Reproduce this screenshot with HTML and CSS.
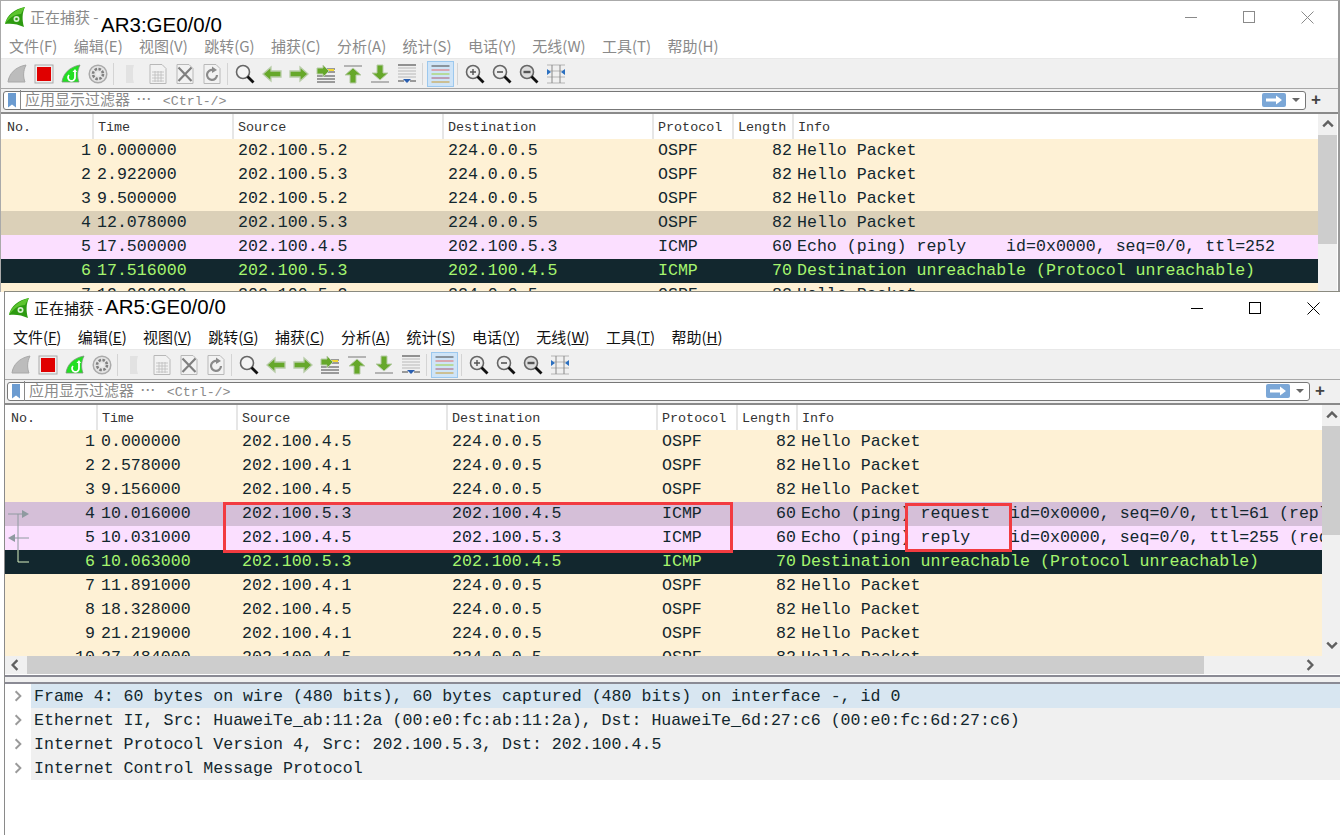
FILE: index.html
```html
<!DOCTYPE html>
<html lang="zh-CN">
<head>
  <meta charset="UTF-8">
  <title>正在捕获</title>
  <link rel="stylesheet" href="styles.css">
</head>
<body>
  <svg class="icon-defs" aria-hidden="true">
    <symbol id="i-logo" viewBox="0 0 20 20"><path d="M0 17C2 8 9 2 20 0C17 6 17 13 19 20C13 17 6 16 0 17Z" fill="#2c9a10"/><path d="M0 17C2 9 10 3 20 0C18 3 17 5 16 7C10 7 4 11 0 17Z" fill="#5cc52e"/><circle cx="11.5" cy="12" r="3" fill="#d8f0d0"/><circle cx="11.5" cy="12" r="1.3" fill="#2c9a10"/></symbol>
    <symbol id="i-fin" viewBox="0 0 20 20"><path d="M1 18C2 10 8 3 19 1C16 7 16 13 18 18Z" fill="#bcbcbc" stroke="#a8a8a8"/></symbol>
    <symbol id="i-stop" viewBox="0 0 20 20"><rect x="1" y="1" width="18" height="18" fill="#eee" stroke="#aaa"/><rect x="3" y="3" width="14" height="14" fill="#e00000"/></symbol>
    <symbol id="i-restart" viewBox="0 0 20 20"><path d="M1 18C2 10 8 3 19 1C16 7 16 13 18 18Z" fill="#22e022" stroke="#7a947a" stroke-width=".8"/><path d="M14 8V13A3.5 3.5 0 1 1 8 11" fill="none" stroke="#fff" stroke-width="1.8"/><path d="M11.5 8H16L14 5Z" fill="#fff"/></symbol>
    <symbol id="i-gear" viewBox="0 0 20 20"><circle cx="10" cy="10" r="8.8" fill="#e4e4e4" stroke="#aaa" stroke-width="1.5"/><circle cx="10" cy="10" r="5" fill="none" stroke="#808080" stroke-width="2.6" stroke-dasharray="2.5 1.4"/><circle cx="10" cy="10" r="2" fill="#eee"/></symbol>
    <symbol id="i-open" viewBox="0 0 20 20"><path d="M5 1H13L12 5V15L13 19H5Z" fill="#e2e2e2"/></symbol>
    <symbol id="i-file" viewBox="0 0 20 20"><path d="M2 .5H14L18 4.5V19.5H2Z" fill="#f2f2f2" stroke="#b8b8b8"/><path d="M4 8H16M4 11H16M4 14H16M4 17H16M7 7V18M10 7V18M13 7V18" stroke="#bcbcbc" stroke-width=".8"/></symbol>
    <symbol id="i-close" viewBox="0 0 20 20"><path d="M2 .5H14L18 4.5V19.5H2Z" fill="#f2f2f2" stroke="#b8b8b8"/><path d="M3.5 3.5L16.5 17M16.5 3.5L3.5 17" stroke="#808080" stroke-width="2.2"/></symbol>
    <symbol id="i-reload" viewBox="0 0 20 20"><path d="M2 .5H14L18 4.5V19.5H2Z" fill="#f2f2f2" stroke="#b8b8b8"/><path d="M15 11A5 5 0 1 1 11 6" fill="none" stroke="#8a8a8a" stroke-width="2.2"/><path d="M10 2.5L15 6L10 9Z" fill="#8a8a8a"/></symbol>
    <symbol id="i-find" viewBox="0 0 20 20"><circle cx="8" cy="8" r="6.5" fill="#f4f4f4" stroke="#666" stroke-width="1.6"/><path d="M12.5 12.5L18.5 18.5" stroke="#111" stroke-width="2.8"/></symbol>
    <symbol id="i-prev" viewBox="0 0 20 20"><path d="M1 10L9 3V7H19V13H9V17Z" fill="#66a82a" stroke="#b8cca8" stroke-width="1.3"/></symbol>
    <symbol id="i-next" viewBox="0 0 20 20"><path d="M19 10L11 3V7H1V13H11V17Z" fill="#66a82a" stroke="#b8cca8" stroke-width="1.3"/></symbol>
    <symbol id="i-goto" viewBox="0 0 20 20"><path d="M1 5H19M1 8H19M1 12H19M1 15H19M1 18H19" stroke="#444" stroke-width="1.1"/><path d="M11 6H18" stroke="#f2d836" stroke-width="2"/><path d="M13 7L7 1V4H1V10H7V13Z" fill="#66a82a" stroke="#b8cca8"/></symbol>
    <symbol id="i-top" viewBox="0 0 20 20"><path d="M1 2H19" stroke="#a0a0a0" stroke-width="1.5"/><path d="M10 4L18 11H13V19H7V11H2Z" fill="#66a82a" stroke="#b8cca8"/></symbol>
    <symbol id="i-bottom" viewBox="0 0 20 20"><path d="M1 18H19" stroke="#a0a0a0" stroke-width="1.5"/><path d="M10 16L18 9H13V1H7V9H2Z" fill="#66a82a" stroke="#b8cca8"/></symbol>
    <symbol id="i-last" viewBox="0 0 20 20"><path d="M1 1H19" stroke="#444" stroke-width="1.1"/><path d="M1 4H19M1 7H19M1 10H19M1 13H19" stroke="#b8b8b8"/><path d="M1 17H7M13 17H19" stroke="#444" stroke-width="1.1"/><path d="M6 15H14L10 19Z" fill="#2a5fb0"/></symbol>
    <symbol id="i-color" viewBox="0 0 20 20"><path d="M1 2H19" stroke="#444"/><path d="M1 6H19" stroke="#e06a6a"/><path d="M1 10H19" stroke="#9ed040"/><path d="M1 14H19" stroke="#a85a70"/><path d="M1 18H19" stroke="#c89a30"/></symbol>
    <symbol id="i-zoomin" viewBox="0 0 20 20"><circle cx="8" cy="8" r="6.5" fill="#eee" stroke="#666" stroke-width="1.6"/><path d="M5 8H11M8 5V11" stroke="#555" stroke-width="1.4"/><path d="M12.5 12.5L18.5 18.5" stroke="#111" stroke-width="2.8"/></symbol>
    <symbol id="i-zoomout" viewBox="0 0 20 20"><circle cx="8" cy="8" r="6.5" fill="#eee" stroke="#666" stroke-width="1.6"/><path d="M5 8H11" stroke="#555" stroke-width="1.6"/><path d="M12.5 12.5L18.5 18.5" stroke="#111" stroke-width="2.8"/></symbol>
    <symbol id="i-zoomreset" viewBox="0 0 20 20"><circle cx="8" cy="8" r="6.5" fill="#ddd" stroke="#666" stroke-width="1.6"/><rect x="4.5" y="6.8" width="7" height="2.4" fill="#555"/><path d="M12.5 12.5L18.5 18.5" stroke="#111" stroke-width="2.8"/></symbol>
    <symbol id="i-resize" viewBox="0 0 20 20"><path d="M1 1H19M1 7H19M1 13H19M1 19H19" stroke="#b4b4b4"/><path d="M6 1V19M14 1V19" stroke="#888"/><path d="M1 5L5 8L1 11Z M19 5L15 8L19 11Z" fill="#2a6fc0"/></symbol>
    <symbol id="i-go" viewBox="0 0 24 14"><rect width="24" height="14" rx="2" fill="#7ba7d7"/><path d="M4 5.5H14V2.5L20 7L14 11.5V8.5H4Z" fill="#fff"/></symbol>
  </svg>

  <div class="desktop">
    <section class="window window-back">
      <header class="titlebar">
        <svg class="logo"><use href="#i-logo"/></svg>
        <span class="title-text">正在捕获 -</span>
        <span class="title-name">AR3:GE0/0/0</span>
        <div class="win-controls">
          <span class="win-btn"><i class="win-min"></i></span>
          <span class="win-btn"><i class="win-max"></i></span>
          <span class="win-btn"><svg viewBox="0 0 13 13"><path d="M.5.5L12.5 12.5M12.5.5L.5 12.5"/></svg></span>
        </div>
      </header>
      <nav class="menubar">
        <span>文件(<u>F</u>)</span><span>编辑(<u>E</u>)</span><span>视图(<u>V</u>)</span><span>跳转(<u>G</u>)</span><span>捕获(<u>C</u>)</span><span>分析(<u>A</u>)</span><span>统计(<u>S</u>)</span><span>电话(<u>Y</u>)</span><span>无线(<u>W</u>)</span><span>工具(<u>T</u>)</span><span>帮助(<u>H</u>)</span>
      </nav>
      <div class="toolbar">
        <span class="tool"><svg><use href="#i-fin"/></svg></span>
        <span class="tool"><svg><use href="#i-stop"/></svg></span>
        <span class="tool"><svg><use href="#i-restart"/></svg></span>
        <span class="tool"><svg><use href="#i-gear"/></svg></span>
        <span class="tool-sep"></span>
        <span class="tool"><svg><use href="#i-open"/></svg></span>
        <span class="tool"><svg><use href="#i-file"/></svg></span>
        <span class="tool"><svg><use href="#i-close"/></svg></span>
        <span class="tool"><svg><use href="#i-reload"/></svg></span>
        <span class="tool-sep"></span>
        <span class="tool"><svg><use href="#i-find"/></svg></span>
        <span class="tool"><svg><use href="#i-prev"/></svg></span>
        <span class="tool"><svg><use href="#i-next"/></svg></span>
        <span class="tool"><svg><use href="#i-goto"/></svg></span>
        <span class="tool"><svg><use href="#i-top"/></svg></span>
        <span class="tool"><svg><use href="#i-bottom"/></svg></span>
        <span class="tool"><svg><use href="#i-last"/></svg></span>
        <span class="tool-sep"></span>
        <span class="tool tool-on"><svg><use href="#i-color"/></svg></span>
        <span class="tool-sep"></span>
        <span class="tool"><svg><use href="#i-zoomin"/></svg></span>
        <span class="tool"><svg><use href="#i-zoomout"/></svg></span>
        <span class="tool"><svg><use href="#i-zoomreset"/></svg></span>
        <span class="tool"><svg><use href="#i-resize"/></svg></span>
      </div>
      <div class="filterbar">
        <div class="filter-box">
          <span class="bookmark"></span>
          <span class="filter-text">应用显示过滤器 … <span class="filter-hint">&lt;Ctrl-/&gt;</span></span>
          <svg class="filter-go"><use href="#i-go"/></svg>
          <span class="filter-drop"></span>
        </div>
        <span class="filter-plus">+</span>
      </div>
      <div class="list">
        <div class="list-main">
          <div class="row head"><span>No.</span><span>Time</span><span>Source</span><span>Destination</span><span>Protocol</span><span>Length</span><span>Info</span></div>
          <div class="rows">
            <div class="row ospf"><span class="num">1</span><span class="time">0.000000</span><span>202.100.5.2</span><span>224.0.0.5</span><span>OSPF</span><span class="len">82</span><span class="info">Hello Packet</span></div>
            <div class="row ospf"><span class="num">2</span><span class="time">2.922000</span><span>202.100.5.3</span><span>224.0.0.5</span><span>OSPF</span><span class="len">82</span><span class="info">Hello Packet</span></div>
            <div class="row ospf"><span class="num">3</span><span class="time">9.500000</span><span>202.100.5.2</span><span>224.0.0.5</span><span>OSPF</span><span class="len">82</span><span class="info">Hello Packet</span></div>
            <div class="row marked"><span class="num">4</span><span class="time">12.078000</span><span>202.100.5.3</span><span>224.0.0.5</span><span>OSPF</span><span class="len">82</span><span class="info">Hello Packet</span></div>
            <div class="row icmp"><span class="num">5</span><span class="time">17.500000</span><span>202.100.4.5</span><span>202.100.5.3</span><span>ICMP</span><span class="len">60</span><span class="info">Echo (ping) reply    id=0x0000, seq=0/0, ttl=252</span></div>
            <div class="row error"><span class="num">6</span><span class="time">17.516000</span><span>202.100.5.3</span><span>202.100.4.5</span><span>ICMP</span><span class="len">70</span><span class="info">Destination unreachable (Protocol unreachable)</span></div>
            <div class="row ospf"><span class="num">7</span><span class="time">19.000000</span><span>202.100.5.2</span><span>224.0.0.5</span><span>OSPF</span><span class="len">82</span><span class="info">Hello Packet</span></div>
          </div>
        </div>
        <div class="vscroll">
          <svg class="chev" viewBox="0 0 10 6"><path d="M1 5L5 1L9 5"/></svg>
          <span class="vthumb"></span>
        </div>
      </div>
    </section>

    <section class="window window-front">
      <header class="titlebar">
        <svg class="logo"><use href="#i-logo"/></svg>
        <span class="title-text">正在捕获 -</span>
        <span class="title-name">AR5:GE0/0/0</span>
        <div class="win-controls">
          <span class="win-btn"><i class="win-min"></i></span>
          <span class="win-btn"><i class="win-max"></i></span>
          <span class="win-btn"><svg viewBox="0 0 13 13"><path d="M.5.5L12.5 12.5M12.5.5L.5 12.5"/></svg></span>
        </div>
      </header>
      <nav class="menubar">
        <span>文件(<u>F</u>)</span><span>编辑(<u>E</u>)</span><span>视图(<u>V</u>)</span><span>跳转(<u>G</u>)</span><span>捕获(<u>C</u>)</span><span>分析(<u>A</u>)</span><span>统计(<u>S</u>)</span><span>电话(<u>Y</u>)</span><span>无线(<u>W</u>)</span><span>工具(<u>T</u>)</span><span>帮助(<u>H</u>)</span>
      </nav>
      <div class="toolbar">
        <span class="tool"><svg><use href="#i-fin"/></svg></span>
        <span class="tool"><svg><use href="#i-stop"/></svg></span>
        <span class="tool"><svg><use href="#i-restart"/></svg></span>
        <span class="tool"><svg><use href="#i-gear"/></svg></span>
        <span class="tool-sep"></span>
        <span class="tool"><svg><use href="#i-open"/></svg></span>
        <span class="tool"><svg><use href="#i-file"/></svg></span>
        <span class="tool"><svg><use href="#i-close"/></svg></span>
        <span class="tool"><svg><use href="#i-reload"/></svg></span>
        <span class="tool-sep"></span>
        <span class="tool"><svg><use href="#i-find"/></svg></span>
        <span class="tool"><svg><use href="#i-prev"/></svg></span>
        <span class="tool"><svg><use href="#i-next"/></svg></span>
        <span class="tool"><svg><use href="#i-goto"/></svg></span>
        <span class="tool"><svg><use href="#i-top"/></svg></span>
        <span class="tool"><svg><use href="#i-bottom"/></svg></span>
        <span class="tool"><svg><use href="#i-last"/></svg></span>
        <span class="tool-sep"></span>
        <span class="tool tool-on"><svg><use href="#i-color"/></svg></span>
        <span class="tool-sep"></span>
        <span class="tool"><svg><use href="#i-zoomin"/></svg></span>
        <span class="tool"><svg><use href="#i-zoomout"/></svg></span>
        <span class="tool"><svg><use href="#i-zoomreset"/></svg></span>
        <span class="tool"><svg><use href="#i-resize"/></svg></span>
      </div>
      <div class="filterbar">
        <div class="filter-box">
          <span class="bookmark"></span>
          <span class="filter-text">应用显示过滤器 … <span class="filter-hint">&lt;Ctrl-/&gt;</span></span>
          <svg class="filter-go"><use href="#i-go"/></svg>
          <span class="filter-drop"></span>
        </div>
        <span class="filter-plus">+</span>
      </div>
      <div class="list">
        <div class="list-main">
          <div class="row head"><span>No.</span><span>Time</span><span>Source</span><span>Destination</span><span>Protocol</span><span>Length</span><span>Info</span></div>
          <div class="rows">
            <div class="row ospf"><span class="num">1</span><span class="time">0.000000</span><span>202.100.4.5</span><span>224.0.0.5</span><span>OSPF</span><span class="len">82</span><span class="info">Hello Packet</span></div>
            <div class="row ospf"><span class="num">2</span><span class="time">2.578000</span><span>202.100.4.1</span><span>224.0.0.5</span><span>OSPF</span><span class="len">82</span><span class="info">Hello Packet</span></div>
            <div class="row ospf"><span class="num">3</span><span class="time">9.156000</span><span>202.100.4.5</span><span>224.0.0.5</span><span>OSPF</span><span class="len">82</span><span class="info">Hello Packet</span></div>
            <div class="row selected"><span class="num">4</span><span class="time">10.016000</span><span>202.100.5.3</span><span>202.100.4.5</span><span>ICMP</span><span class="len">60</span><span class="info">Echo (ping) request  id=0x0000, seq=0/0, ttl=61 (reply in 5)</span></div>
            <div class="row icmp"><span class="num">5</span><span class="time">10.031000</span><span>202.100.4.5</span><span>202.100.5.3</span><span>ICMP</span><span class="len">60</span><span class="info">Echo (ping) reply    id=0x0000, seq=0/0, ttl=255 (request in 4)</span></div>
            <div class="row error"><span class="num">6</span><span class="time">10.063000</span><span>202.100.5.3</span><span>202.100.4.5</span><span>ICMP</span><span class="len">70</span><span class="info">Destination unreachable (Protocol unreachable)</span></div>
            <div class="row ospf"><span class="num">7</span><span class="time">11.891000</span><span>202.100.4.1</span><span>224.0.0.5</span><span>OSPF</span><span class="len">82</span><span class="info">Hello Packet</span></div>
            <div class="row ospf"><span class="num">8</span><span class="time">18.328000</span><span>202.100.4.5</span><span>224.0.0.5</span><span>OSPF</span><span class="len">82</span><span class="info">Hello Packet</span></div>
            <div class="row ospf"><span class="num">9</span><span class="time">21.219000</span><span>202.100.4.1</span><span>224.0.0.5</span><span>OSPF</span><span class="len">82</span><span class="info">Hello Packet</span></div>
            <div class="row ospf"><span class="num">10</span><span class="time">27.484000</span><span>202.100.4.5</span><span>224.0.0.5</span><span>OSPF</span><span class="len">82</span><span class="info">Hello Packet</span></div>
            <svg class="related" viewBox="0 0 26 62">
              <path d="M13 12V48" stroke="#8f9aa0" fill="none"/>
              <path d="M3 12H18M9 36H24" stroke="#8f9aa0" fill="none"/>
              <path d="M24 12L17 8V16ZM3 36L10 32V40Z" fill="#8f9aa0"/>
              <path d="M13 48V60H24" stroke="#d8f0c0" fill="none"/>
            </svg>
            <span class="mark mark-row"></span>
            <span class="mark mark-kind"></span>
          </div>
        </div>
        <div class="vscroll">
          <svg class="chev" viewBox="0 0 10 6"><path d="M1 5L5 1L9 5"/></svg>
          <span class="vthumb"></span>
          <svg class="chev chev-down" viewBox="0 0 10 6"><path d="M1 1L5 5L9 1"/></svg>
        </div>
      </div>
      <div class="hscroll">
        <svg class="chev-side" viewBox="0 0 6 10"><path d="M5 1L1 5L5 9"/></svg>
        <span class="hthumb"></span>
        <svg class="chev-side" viewBox="0 0 6 10"><path d="M1 1L5 5L1 9"/></svg>
      </div>
      <div class="splitter"></div>
      <div class="details">
        <div class="detail detail-on"><svg class="chev-tree" viewBox="0 0 6 10"><path d="M1 1L5 5L1 9"/></svg><span class="detail-text">Frame 4: 60 bytes on wire (480 bits), 60 bytes captured (480 bits) on interface -, id 0</span></div>
        <div class="detail"><svg class="chev-tree" viewBox="0 0 6 10"><path d="M1 1L5 5L1 9"/></svg><span class="detail-text">Ethernet II, Src: HuaweiTe_ab:11:2a (00:e0:fc:ab:11:2a), Dst: HuaweiTe_6d:27:c6 (00:e0:fc:6d:27:c6)</span></div>
        <div class="detail"><svg class="chev-tree" viewBox="0 0 6 10"><path d="M1 1L5 5L1 9"/></svg><span class="detail-text">Internet Protocol Version 4, Src: 202.100.5.3, Dst: 202.100.4.5</span></div>
        <div class="detail"><svg class="chev-tree" viewBox="0 0 6 10"><path d="M1 1L5 5L1 9"/></svg><span class="detail-text">Internet Control Message Protocol</span></div>
      </div>
    </section>
  </div>
</body>
</html>
```

FILE: styles.css
```css
* {
  box-sizing: border-box;
}
body {
  margin: 0;
  overflow: hidden;
  background: #fff;
  font-family: "Noto Sans CJK SC", "Liberation Sans", sans-serif;
}
.icon-defs {
  position: absolute;
  width: 0;
  height: 0;
}
.desktop {
  position: relative;
  width: 1340px;
  height: 835px;
  overflow: hidden;
}

/* windows */
.window {
  position: absolute;
  width: 1340px;
  background: #fff;
  overflow: hidden;
}
.window-back {
  top: 0;
  left: 0;
  height: 292px;
  border-top: 1px solid #aaa;
  border-left: 1px solid #aaa;
  border-right: 2px solid #999;
  color: #8a8a8a;
}
.window-back u {
  text-decoration: none;
}
.window-front {
  top: 291px;
  left: 4px;
  height: 544px;
  border-top: 1px solid #8a8a80;
  border-left: 1px solid #8a8a8a;
  color: #111;
}

/* title bar */
.titlebar {
  display: flex;
  align-items: center;
  height: 34px;
  padding: 0 0 3px 4px;
}
.logo {
  width: 20px;
  height: 20px;
  margin-right: 5px;
  flex: none;
}
.title-text {
  font-size: 15px;
  width: 71px;
  flex: none;
}
.title-name {
  font-family: "Liberation Sans", sans-serif;
  font-size: 20.5px;
  color: #000;
  margin-top: -2px;
}
.window-back .title-name {
  margin-top: 17px;
}
.win-controls {
  display: flex;
  margin-left: auto;
  margin-right: 1px;
  height: 100%;
  margin-top: 1px;
}
.win-btn {
  display: flex;
  width: 58.5px;
  align-items: center;
  justify-content: center;
}
.win-min {
  width: 12px;
  border-top: 1px solid currentColor;
}
.win-max {
  width: 12px;
  height: 12px;
  border: 1px solid currentColor;
}
.win-btn svg {
  width: 13px;
  height: 13px;
  fill: none;
  stroke: currentColor;
}
.window-front .win-btn {
  color: #000;
}

/* menu */
.menubar {
  display: flex;
  gap: 16.3px;
  height: 24px;
  padding: 0 0 2px 8px;
  align-items: center;
  font-size: 15px;
  line-height: 20px;
  border-bottom: 1px solid #e8e8e8;
}
.menubar span {
  white-space: nowrap;
}

/* toolbar */
.toolbar {
  display: flex;
  align-items: center;
  height: 30px;
  padding-left: 2px;
  background: #f0f0f0;
  border-bottom: 1px solid #a8a8a8;
}
.tool {
  display: flex;
  width: 27px;
  height: 26px;
  align-items: center;
  justify-content: center;
  flex: none;
}
.tool svg {
  width: 20px;
  height: 20px;
}
.tool-sep {
  width: 1px;
  height: 22px;
  margin: 0 3px 0 2px;
  background: #d4d4d4;
  flex: none;
}
.tool-on {
  background: #cfe4f7;
  border: 1px solid #9cc8ee;
  margin: 0 1px 0 1px;
}
.tool-on svg {
  width: 23px;
}

/* display filter */
.filterbar {
  display: flex;
  align-items: center;
  height: 23px;
  padding: 0 0 1px 2px;
  background: #f0f0f0;
}
.filter-box {
  display: flex;
  align-items: center;
  width: 1303px;
  height: 19px;
  background: #fff;
  border: 1px solid #777;
  border-radius: 3px;
}
.bookmark {
  width: 8px;
  height: 15px;
  margin-left: 4px;
  background: #6b9bd0;
  clip-path: polygon(0 0, 100% 0, 100% 100%, 50% 80%, 0 100%);
  flex: none;
}
.filter-text {
  margin-left: 4px;
  padding-left: 4px;
  border-left: 1px solid #888;
  font-size: 15px;
  line-height: 17px;
  color: #8a8a8a;
  word-spacing: 3px;
  white-space: nowrap;
}
.filter-hint {
  font-family: "Liberation Mono", monospace;
  font-size: 13.3px;
  margin-left: 5px;
}
.filter-go {
  width: 24px;
  height: 14px;
  margin-left: auto;
}
.filter-drop {
  width: 0;
  height: 0;
  margin: 0 5px 0 6px;
  border-left: 4px solid transparent;
  border-right: 4px solid transparent;
  border-top: 4px solid #666;
}
.filter-plus {
  margin-left: 5px;
  font: bold 17px "Liberation Sans", sans-serif;
  color: #444;
}

/* packet list */
.list {
  display: flex;
  height: 253px;
  border-top: 2px solid #8a8a8a;
}
.list-main {
  width: 1317px;
  flex: none;
}
.row {
  display: grid;
  grid-template-columns: 93px 140px 210px 210px 80px 60px 1fr;
  height: 24px;
  line-height: 23px;
  font-family: "Liberation Mono", monospace;
  font-size: 16.6px;
  color: #12272e;
  white-space: pre;
}
.row span {
  padding-left: 4px;
  overflow: hidden;
}
.head {
  height: 25px;
  line-height: 27px;
  background: #fff;
  font-size: 13.4px;
  color: #333;
}
.head span {
  box-shadow: -2px 0 0 #e6e6e6;
}
.head span:first-child {
  padding-left: 6px;
  box-shadow: none;
}
.rows {
  position: relative;
  height: 226px;
  overflow: hidden;
}
.row .num {
  text-align: right;
  padding-right: 3px;
}
.row .time {
  padding-left: 3px;
}
.row .len {
  text-align: right;
  padding-right: 2px;
}
.row .info {
  padding-left: 3px;
}
.ospf {
  background: #fef1d5;
}
.marked {
  background: #dbd0b8;
}
.icmp {
  background: #fbdfff;
}
.selected {
  background: #d5bfd8;
}
.error {
  background: #12272e;
  color: #a6f56e;
}
.related {
  position: absolute;
  top: 72px;
  left: 0;
  width: 26px;
  height: 62px;
}
.mark {
  position: absolute;
  border: 3px solid #f23b40;
}
.mark-row {
  top: 72px;
  left: 218px;
  width: 510px;
  height: 51px;
}
.mark-kind {
  top: 73px;
  left: 900px;
  width: 107px;
  height: 49px;
}

/* scrollbars */
.vscroll {
  display: flex;
  flex-direction: column;
  align-items: center;
  width: 19px;
  background: #f0f0f0;
  flex: none;
}
.chev {
  width: 12px;
  height: 8px;
  margin: 6px 0 7px;
  fill: none;
  stroke: #606060;
  stroke-width: 2;
  flex: none;
}
.vthumb {
  width: 100%;
  height: 109px;
  background: #cdcdcd;
  flex: none;
}
.chev-down {
  margin-top: auto;
}
.hscroll {
  display: flex;
  align-items: center;
  height: 19px;
  background: #f0f0f0;
  border-bottom: 1px solid #fff;
}
.chev-side {
  width: 8px;
  height: 12px;
  margin: 0 8px 0 6px;
  fill: none;
  stroke: #606060;
  stroke-width: 2;
  flex: none;
}
.chev-side:last-child {
  margin-left: 102px;
}
.hthumb {
  width: 1177px;
  height: 100%;
  background: #cdcdcd;
  flex: none;
}
.splitter {
  height: 9px;
  background: #f0f0f0;
  border-top: 2px solid #8a8a94;
  border-bottom: 2px solid #8a8a94;
}

/* packet details */
.details {
  background: #fff;
}
.detail {
  display: flex;
  align-items: center;
  height: 24px;
}
.chev-tree {
  width: 8px;
  height: 12px;
  margin: 0 9px;
  fill: none;
  stroke: #9a9a9a;
  stroke-width: 1.6;
  flex: none;
}
.detail-text {
  flex: 1;
  height: 24px;
  padding-left: 3px;
  background: #f0f0f0;
  font-family: "Liberation Mono", monospace;
  font-size: 16.6px;
  line-height: 26px;
  color: #12272e;
  white-space: pre;
}
.detail-on .detail-text {
  background: #d8e6f1;
}
```
